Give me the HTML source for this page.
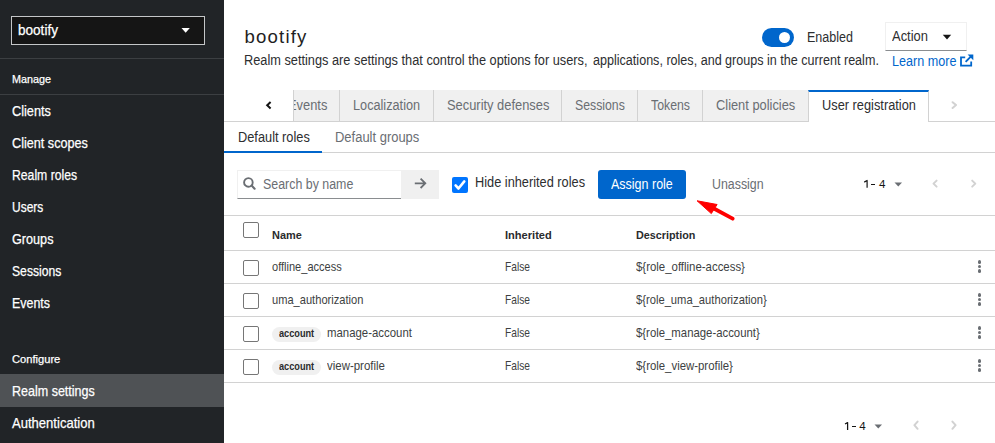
<!DOCTYPE html>
<html><head><meta charset="utf-8"><title>Realm settings</title>
<style>
html,body{margin:0;padding:0;}
body{width:995px;height:443px;position:relative;overflow:hidden;background:#fff;font-family:"Liberation Sans",sans-serif;}
</style></head><body>
<div style="position:absolute;left:0px;top:0px;width:224px;height:443px;background:#212427;"></div>
<div style="position:absolute;left:11px;top:16px;width:194px;height:29px;background:#151515;box-sizing:border-box;border:1px solid #c4c6c8;"></div>
<div style="position:absolute;left:18.00px;top:16px;font-size:14.4px;line-height:29px;height:29px;color:#fff;font-weight:400;letter-spacing:0.000px;white-space:nowrap;-webkit-text-stroke:0.25px #fff;transform:scaleX(0.9423);transform-origin:0 0;">bootify</div>
<svg style="position:absolute;left:181px;top:27px" width="10" height="7" viewBox="0 0 10 7"><path d="M0.5 1.1 L8.8 1.1 L4.65 5.7 Z" fill="#fff"/></svg>
<div style="position:absolute;left:0px;top:58px;width:224px;height:1px;background:#3c3f42;"></div>
<div style="position:absolute;left:12.00px;top:68px;font-size:11.3px;line-height:23px;height:23px;color:#fff;font-weight:400;letter-spacing:0.000px;white-space:nowrap;-webkit-text-stroke:0.25px #fff;transform:scaleX(0.9547);transform-origin:0 0;">Manage</div>
<div style="position:absolute;left:0px;top:94px;width:224px;height:1px;background:#3c3f42;"></div>
<div style="position:absolute;left:12.00px;top:97px;font-size:14.2px;line-height:28px;height:28px;color:#fff;font-weight:400;letter-spacing:0.000px;white-space:nowrap;-webkit-text-stroke:0.25px #fff;transform:scaleX(0.8986);transform-origin:0 0;">Clients</div>
<div style="position:absolute;left:12.00px;top:129px;font-size:14.2px;line-height:28px;height:28px;color:#fff;font-weight:400;letter-spacing:0.000px;white-space:nowrap;-webkit-text-stroke:0.25px #fff;transform:scaleX(0.8915);transform-origin:0 0;">Client scopes</div>
<div style="position:absolute;left:12.00px;top:161px;font-size:14.2px;line-height:28px;height:28px;color:#fff;font-weight:400;letter-spacing:0.000px;white-space:nowrap;-webkit-text-stroke:0.25px #fff;transform:scaleX(0.8607);transform-origin:0 0;">Realm roles</div>
<div style="position:absolute;left:12.00px;top:193px;font-size:14.2px;line-height:28px;height:28px;color:#fff;font-weight:400;letter-spacing:0.000px;white-space:nowrap;-webkit-text-stroke:0.25px #fff;transform:scaleX(0.8437);transform-origin:0 0;">Users</div>
<div style="position:absolute;left:12.00px;top:225px;font-size:14.2px;line-height:28px;height:28px;color:#fff;font-weight:400;letter-spacing:0.000px;white-space:nowrap;-webkit-text-stroke:0.25px #fff;transform:scaleX(0.8915);transform-origin:0 0;">Groups</div>
<div style="position:absolute;left:12.00px;top:257px;font-size:14.2px;line-height:28px;height:28px;color:#fff;font-weight:400;letter-spacing:0.000px;white-space:nowrap;-webkit-text-stroke:0.25px #fff;transform:scaleX(0.8576);transform-origin:0 0;">Sessions</div>
<div style="position:absolute;left:12.00px;top:289px;font-size:14.2px;line-height:28px;height:28px;color:#fff;font-weight:400;letter-spacing:0.000px;white-space:nowrap;-webkit-text-stroke:0.25px #fff;transform:scaleX(0.8756);transform-origin:0 0;">Events</div>
<div style="position:absolute;left:12.00px;top:348px;font-size:11.3px;line-height:23px;height:23px;color:#fff;font-weight:400;letter-spacing:0.000px;white-space:nowrap;-webkit-text-stroke:0.25px #fff;transform:scaleX(0.9857);transform-origin:0 0;">Configure</div>
<div style="position:absolute;left:0px;top:374px;width:224px;height:33px;background:#4f5255;"></div>
<div style="position:absolute;left:12.00px;top:377px;font-size:14.2px;line-height:28px;height:28px;color:#fff;font-weight:400;letter-spacing:0.000px;white-space:nowrap;-webkit-text-stroke:0.25px #fff;transform:scaleX(0.8818);transform-origin:0 0;">Realm settings</div>
<div style="position:absolute;left:12.00px;top:409px;font-size:14.2px;line-height:28px;height:28px;color:#fff;font-weight:400;letter-spacing:0.000px;white-space:nowrap;-webkit-text-stroke:0.25px #fff;transform:scaleX(0.9200);transform-origin:0 0;">Authentication</div>
<div style="position:absolute;left:244.50px;top:18px;font-size:18.6px;line-height:37px;height:37px;color:#1f1f1f;font-weight:400;letter-spacing:1.183px;white-space:nowrap;">bootify</div>
<div style="position:absolute;left:244.00px;top:46px;font-size:14px;line-height:28px;height:28px;color:#2d2e30;font-weight:400;letter-spacing:0.000px;white-space:nowrap;transform:scaleX(0.9120);transform-origin:0 0;">Realm settings are settings that control the options for users,</div>
<div style="position:absolute;left:592.60px;top:46px;font-size:14px;line-height:28px;height:28px;color:#2d2e30;font-weight:400;letter-spacing:0.000px;white-space:nowrap;transform:scaleX(0.8982);transform-origin:0 0;">applications, roles, and groups in the current realm.</div>
<div style="position:absolute;left:762px;top:28px;width:32px;height:19px;background:#0066cc;border-radius:10px;"></div>
<div style="position:absolute;left:778.5px;top:32px;width:11px;height:11px;background:#fff;border-radius:50%;"></div>
<div style="position:absolute;left:807.00px;top:24px;font-size:13.8px;line-height:28px;height:28px;color:#2d2e30;font-weight:400;letter-spacing:0.000px;white-space:nowrap;transform:scaleX(0.9082);transform-origin:0 0;">Enabled</div>
<div style="position:absolute;left:885px;top:22px;width:82px;height:29px;background:#fff;box-sizing:border-box;border:1px solid #f0f0f0;border-bottom-color:#8a8d90;"></div>
<div style="position:absolute;left:892.00px;top:23px;font-size:13.8px;line-height:28px;height:28px;color:#2d2e30;font-weight:400;letter-spacing:0.000px;white-space:nowrap;transform:scaleX(0.9387);transform-origin:0 0;">Action</div>
<svg style="position:absolute;left:942px;top:34px" width="10" height="7" viewBox="0 0 10 7"><path d="M0.8 0.8 L9.2 0.8 L5 5.5 Z" fill="#151515"/></svg>
<div style="position:absolute;left:892.00px;top:48px;font-size:13.8px;line-height:28px;height:28px;color:#0066cc;font-weight:400;letter-spacing:0.000px;white-space:nowrap;transform:scaleX(0.9128);transform-origin:0 0;">Learn more</div>
<svg style="position:absolute;left:960px;top:54px" width="14" height="13" viewBox="0 0 14 13"><path d="M5.2 3.4 H1 V11.6 H11.2 V7.6" fill="none" stroke="#0066cc" stroke-width="1.8"/><path d="M5.6 7.8 L11 2.4" stroke="#0066cc" stroke-width="1.9"/><path d="M7.6 0.6 H13.3 V6.3 Z" fill="#0066cc"/></svg>
<svg style="position:absolute;left:265px;top:101px" width="8" height="9" viewBox="0 0 8 9"><path d="M5.6 1.1 L2.2 4.3 L5.6 7.5" fill="none" stroke="#151515" stroke-width="2"/></svg>
<div style="position:absolute;left:224px;top:121px;width:771px;height:1px;background:#d2d2d2;"></div>
<div style="position:absolute;left:293px;top:90px;width:515px;height:31px;background:#f0f0f0;"></div>
<div style="position:absolute;left:293px;top:90px;width:1px;height:31px;background:#d2d2d2;"></div>
<div style="position:absolute;left:339px;top:90px;width:1px;height:31px;background:#d2d2d2;"></div>
<div style="position:absolute;left:433px;top:90px;width:1px;height:31px;background:#d2d2d2;"></div>
<div style="position:absolute;left:561px;top:90px;width:1px;height:31px;background:#d2d2d2;"></div>
<div style="position:absolute;left:637px;top:90px;width:1px;height:31px;background:#d2d2d2;"></div>
<div style="position:absolute;left:702px;top:90px;width:1px;height:31px;background:#d2d2d2;"></div>
<div style="position:absolute;left:294px;top:90px;width:45px;height:31px;overflow:hidden">
<div style="position:absolute;left:-6.00px;top:1px;font-size:14px;line-height:28px;height:28px;color:#6a6e73;font-weight:400;letter-spacing:0.000px;white-space:nowrap;transform:scaleX(0.92);transform-origin:0 0;">Events</div>
</div>
<div style="position:absolute;left:353.40px;top:91px;font-size:14px;line-height:28px;height:28px;color:#6a6e73;font-weight:400;letter-spacing:0.000px;white-space:nowrap;transform:scaleX(0.9074);transform-origin:0 0;">Localization</div>
<div style="position:absolute;left:446.60px;top:91px;font-size:14px;line-height:28px;height:28px;color:#6a6e73;font-weight:400;letter-spacing:0.000px;white-space:nowrap;transform:scaleX(0.9200);transform-origin:0 0;">Security defenses</div>
<div style="position:absolute;left:574.70px;top:91px;font-size:14px;line-height:28px;height:28px;color:#6a6e73;font-weight:400;letter-spacing:0.000px;white-space:nowrap;transform:scaleX(0.8768);transform-origin:0 0;">Sessions</div>
<div style="position:absolute;left:651.00px;top:91px;font-size:14px;line-height:28px;height:28px;color:#6a6e73;font-weight:400;letter-spacing:0.000px;white-space:nowrap;transform:scaleX(0.8794);transform-origin:0 0;">Tokens</div>
<div style="position:absolute;left:716.30px;top:91px;font-size:14px;line-height:28px;height:28px;color:#6a6e73;font-weight:400;letter-spacing:0.000px;white-space:nowrap;transform:scaleX(0.9172);transform-origin:0 0;">Client policies</div>
<div style="position:absolute;left:808px;top:90px;width:121px;height:32px;background:#fff;box-sizing:border-box;border-left:1px solid #d2d2d2;border-right:1px solid #d2d2d2;border-top:2px solid #0066cc;"></div>
<div style="position:absolute;left:821.60px;top:91px;font-size:14px;line-height:28px;height:28px;color:#2d2e30;font-weight:400;letter-spacing:0.000px;white-space:nowrap;transform:scaleX(0.9143);transform-origin:0 0;">User registration</div>
<svg style="position:absolute;left:950px;top:101px" width="8" height="9" viewBox="0 0 8 9"><path d="M2.6 1.2 L6 4.1 L2.6 7" fill="none" stroke="#d2d2d2" stroke-width="2" stroke-linecap="round" stroke-linejoin="round"/></svg>
<div style="position:absolute;left:224px;top:152px;width:771px;height:1px;background:#d2d2d2;"></div>
<div style="position:absolute;left:224px;top:151px;width:98px;height:2px;background:#0066cc;"></div>
<div style="position:absolute;left:237.60px;top:123px;font-size:14px;line-height:28px;height:28px;color:#2d2e30;font-weight:400;letter-spacing:0.000px;white-space:nowrap;transform:scaleX(0.9135);transform-origin:0 0;">Default roles</div>
<div style="position:absolute;left:335.20px;top:123px;font-size:14px;line-height:28px;height:28px;color:#6a6e73;font-weight:400;letter-spacing:0.000px;white-space:nowrap;transform:scaleX(0.9259);transform-origin:0 0;">Default groups</div>
<div style="position:absolute;left:237px;top:170px;width:164px;height:29px;background:#fff;box-sizing:border-box;border:1px solid #f0f0f0;border-bottom-color:#8a8d90;border-right:none;"></div>
<svg style="position:absolute;left:243px;top:177px" width="14" height="14" viewBox="0 0 14 14"><circle cx="5.4" cy="5.4" r="4.3" fill="none" stroke="#6a6e73" stroke-width="1.9"/><path d="M8.6 8.6 L11.6 11.7" stroke="#6a6e73" stroke-width="2.1" stroke-linecap="round"/></svg>
<div style="position:absolute;left:262.70px;top:170px;font-size:14px;line-height:28px;height:28px;color:#6a6e73;font-weight:400;letter-spacing:0.000px;white-space:nowrap;transform:scaleX(0.8857);transform-origin:0 0;">Search by name</div>
<div style="position:absolute;left:401px;top:170px;width:38px;height:29px;background:#f0f0f0;"></div>
<svg style="position:absolute;left:413px;top:176px" width="15" height="14" viewBox="0 0 15 14"><path d="M1.8 7.3 H12.4 M7.6 2.6 L12.3 7.3 L7.6 12" fill="none" stroke="#6a6e73" stroke-width="1.8"/></svg>
<div style="position:absolute;left:452px;top:177px;width:16px;height:16px;background:#0075ff;border-radius:2px;"></div>
<svg style="position:absolute;left:452px;top:177px" width="16" height="16" viewBox="0 0 16 16"><path d="M3.6 8.4 L6.5 11.5 L12.3 4.4" fill="none" stroke="#fff" stroke-width="2.6" stroke-linecap="round" stroke-linejoin="round"/></svg>
<div style="position:absolute;left:475.00px;top:168px;font-size:14px;line-height:28px;height:28px;color:#2d2e30;font-weight:400;letter-spacing:0.000px;white-space:nowrap;transform:scaleX(0.9121);transform-origin:0 0;">Hide inherited roles</div>
<div style="position:absolute;left:598px;top:170px;width:88px;height:29px;background:#0066cc;border-radius:3px;"></div>
<div style="position:absolute;left:611.30px;top:170px;font-size:14px;line-height:28px;height:28px;color:#fff;font-weight:400;letter-spacing:0.000px;white-space:nowrap;transform:scaleX(0.8924);transform-origin:0 0;">Assign role</div>
<div style="position:absolute;left:712.00px;top:170px;font-size:14px;line-height:28px;height:28px;color:#6a6e73;font-weight:400;letter-spacing:0.000px;white-space:nowrap;transform:scaleX(0.8843);transform-origin:0 0;">Unassign</div>
<svg style="position:absolute;left:862px;top:178px" width="8" height="12" viewBox="0 0 8 12"><path d="M2.2 4.1 L5.1 2.5 V9.8" fill="none" stroke="#151515" stroke-width="1.2" stroke-linejoin="round"/></svg>
<div style="position:absolute;left:871px;top:183.6px;width:4px;height:1.3px;background:#151515;"></div>
<div style="position:absolute;left:879.00px;top:172px;font-size:11.6px;line-height:23px;height:23px;color:#151515;font-weight:400;letter-spacing:0.000px;white-space:nowrap;">4</div>
<svg style="position:absolute;left:893.5px;top:182px" width="9" height="5" viewBox="0 0 9 5"><path d="M0.5 0.5 H8 L4.25 4.5 Z" fill="#6a6e73"/></svg>
<svg style="position:absolute;left:931px;top:179px" width="8" height="10" viewBox="0 0 8 10"><path d="M5.6 1.6 L2.5 4.6 L5.6 7.6" fill="none" stroke="#d2d2d2" stroke-width="2" stroke-linecap="round" stroke-linejoin="round"/></svg>
<svg style="position:absolute;left:969px;top:179px" width="8" height="10" viewBox="0 0 8 10"><path d="M3.2 1.6 L6.3 4.6 L3.2 7.6" fill="none" stroke="#d2d2d2" stroke-width="2" stroke-linecap="round" stroke-linejoin="round"/></svg>
<div style="position:absolute;left:224px;top:215px;width:771px;height:1px;background:#d2d2d2;"></div>
<div style="position:absolute;left:243px;top:222px;width:16px;height:16px;background:#fff;box-sizing:border-box;border:1px solid #767676;border-radius:2px;"></div>
<div style="position:absolute;left:272.20px;top:223px;font-size:11.6px;line-height:23px;height:23px;color:#2a2b2d;font-weight:700;letter-spacing:0.000px;white-space:nowrap;transform:scaleX(0.9430);transform-origin:0 0;">Name</div>
<div style="position:absolute;left:505.00px;top:223px;font-size:11.6px;line-height:23px;height:23px;color:#2a2b2d;font-weight:700;letter-spacing:0.000px;white-space:nowrap;transform:scaleX(0.9551);transform-origin:0 0;">Inherited</div>
<div style="position:absolute;left:636.20px;top:223px;font-size:11.6px;line-height:23px;height:23px;color:#2a2b2d;font-weight:700;letter-spacing:0.000px;white-space:nowrap;transform:scaleX(0.9310);transform-origin:0 0;">Description</div>
<div style="position:absolute;left:224px;top:250px;width:771px;height:1px;background:#d2d2d2;"></div>
<div style="position:absolute;left:243px;top:260px;width:16px;height:16px;background:#fff;box-sizing:border-box;border:1px solid #767676;border-radius:2px;"></div>
<div style="position:absolute;left:272.20px;top:255px;font-size:12.4px;line-height:25px;height:25px;color:#3d3f42;font-weight:400;letter-spacing:0.000px;white-space:nowrap;transform:scaleX(0.8909);transform-origin:0 0;">offline_access</div>
<div style="position:absolute;left:505.00px;top:255px;font-size:12.4px;line-height:25px;height:25px;color:#3d3f42;font-weight:400;letter-spacing:0.000px;white-space:nowrap;transform:scaleX(0.8251);transform-origin:0 0;">False</div>
<div style="position:absolute;left:635.70px;top:255px;font-size:12.4px;line-height:25px;height:25px;color:#3d3f42;font-weight:400;letter-spacing:0.000px;white-space:nowrap;transform:scaleX(0.9210);transform-origin:0 0;">${role_offline-access}</div>
<div style="position:absolute;left:977.6px;top:260.04999999999995px;width:3.6px;height:3.6px;background:#6a6e73;border-radius:50%;"></div>
<div style="position:absolute;left:977.6px;top:264.65px;width:3.6px;height:3.6px;background:#6a6e73;border-radius:50%;"></div>
<div style="position:absolute;left:977.6px;top:269.15px;width:3.6px;height:3.6px;background:#6a6e73;border-radius:50%;"></div>
<div style="position:absolute;left:224px;top:283px;width:771px;height:1px;background:#d2d2d2;"></div>
<div style="position:absolute;left:243px;top:293px;width:16px;height:16px;background:#fff;box-sizing:border-box;border:1px solid #767676;border-radius:2px;"></div>
<div style="position:absolute;left:272.20px;top:288px;font-size:12.4px;line-height:25px;height:25px;color:#3d3f42;font-weight:400;letter-spacing:0.000px;white-space:nowrap;transform:scaleX(0.8961);transform-origin:0 0;">uma_authorization</div>
<div style="position:absolute;left:505.00px;top:288px;font-size:12.4px;line-height:25px;height:25px;color:#3d3f42;font-weight:400;letter-spacing:0.000px;white-space:nowrap;transform:scaleX(0.8251);transform-origin:0 0;">False</div>
<div style="position:absolute;left:635.70px;top:288px;font-size:12.4px;line-height:25px;height:25px;color:#3d3f42;font-weight:400;letter-spacing:0.000px;white-space:nowrap;transform:scaleX(0.9036);transform-origin:0 0;">${role_uma_authorization}</div>
<div style="position:absolute;left:977.6px;top:293.04999999999995px;width:3.6px;height:3.6px;background:#6a6e73;border-radius:50%;"></div>
<div style="position:absolute;left:977.6px;top:297.65px;width:3.6px;height:3.6px;background:#6a6e73;border-radius:50%;"></div>
<div style="position:absolute;left:977.6px;top:302.15px;width:3.6px;height:3.6px;background:#6a6e73;border-radius:50%;"></div>
<div style="position:absolute;left:224px;top:316px;width:771px;height:1px;background:#d2d2d2;"></div>
<div style="position:absolute;left:243px;top:326px;width:16px;height:16px;background:#fff;box-sizing:border-box;border:1px solid #767676;border-radius:2px;"></div>
<div style="position:absolute;left:272px;top:326.9px;width:49px;height:15px;background:#f0f0f0;border-radius:8px;"></div>
<div style="position:absolute;left:278.80px;top:323px;font-size:10.4px;line-height:21px;height:21px;color:#2a2b2d;font-weight:700;letter-spacing:0.000px;white-space:nowrap;transform:scaleX(0.8822);transform-origin:0 0;">account</div>
<div style="position:absolute;left:327.00px;top:321px;font-size:12.4px;line-height:25px;height:25px;color:#3d3f42;font-weight:400;letter-spacing:0.000px;white-space:nowrap;transform:scaleX(0.9204);transform-origin:0 0;">manage-account</div>
<div style="position:absolute;left:505.00px;top:321px;font-size:12.4px;line-height:25px;height:25px;color:#3d3f42;font-weight:400;letter-spacing:0.000px;white-space:nowrap;transform:scaleX(0.8251);transform-origin:0 0;">False</div>
<div style="position:absolute;left:635.70px;top:321px;font-size:12.4px;line-height:25px;height:25px;color:#3d3f42;font-weight:400;letter-spacing:0.000px;white-space:nowrap;transform:scaleX(0.9164);transform-origin:0 0;">${role_manage-account}</div>
<div style="position:absolute;left:977.6px;top:326.04999999999995px;width:3.6px;height:3.6px;background:#6a6e73;border-radius:50%;"></div>
<div style="position:absolute;left:977.6px;top:330.65px;width:3.6px;height:3.6px;background:#6a6e73;border-radius:50%;"></div>
<div style="position:absolute;left:977.6px;top:335.15px;width:3.6px;height:3.6px;background:#6a6e73;border-radius:50%;"></div>
<div style="position:absolute;left:224px;top:349px;width:771px;height:1px;background:#d2d2d2;"></div>
<div style="position:absolute;left:243px;top:359px;width:16px;height:16px;background:#fff;box-sizing:border-box;border:1px solid #767676;border-radius:2px;"></div>
<div style="position:absolute;left:272px;top:359.9px;width:49px;height:15px;background:#f0f0f0;border-radius:8px;"></div>
<div style="position:absolute;left:278.80px;top:356px;font-size:10.4px;line-height:21px;height:21px;color:#2a2b2d;font-weight:700;letter-spacing:0.000px;white-space:nowrap;transform:scaleX(0.8822);transform-origin:0 0;">account</div>
<div style="position:absolute;left:327.00px;top:354px;font-size:12.4px;line-height:25px;height:25px;color:#3d3f42;font-weight:400;letter-spacing:0.000px;white-space:nowrap;transform:scaleX(0.9250);transform-origin:0 0;">view-profile</div>
<div style="position:absolute;left:505.00px;top:354px;font-size:12.4px;line-height:25px;height:25px;color:#3d3f42;font-weight:400;letter-spacing:0.000px;white-space:nowrap;transform:scaleX(0.8251);transform-origin:0 0;">False</div>
<div style="position:absolute;left:635.70px;top:354px;font-size:12.4px;line-height:25px;height:25px;color:#3d3f42;font-weight:400;letter-spacing:0.000px;white-space:nowrap;transform:scaleX(0.9189);transform-origin:0 0;">${role_view-profile}</div>
<div style="position:absolute;left:977.6px;top:359.04999999999995px;width:3.6px;height:3.6px;background:#6a6e73;border-radius:50%;"></div>
<div style="position:absolute;left:977.6px;top:363.65px;width:3.6px;height:3.6px;background:#6a6e73;border-radius:50%;"></div>
<div style="position:absolute;left:977.6px;top:368.15px;width:3.6px;height:3.6px;background:#6a6e73;border-radius:50%;"></div>
<div style="position:absolute;left:224px;top:382px;width:771px;height:1px;background:#d2d2d2;"></div>
<svg style="position:absolute;left:843px;top:420px" width="8" height="12" viewBox="0 0 8 12"><path d="M2 4 L4.6 2.6 V10" fill="none" stroke="#151515" stroke-width="1.25" stroke-linejoin="round"/></svg>
<div style="position:absolute;left:852.3px;top:425.6px;width:4px;height:1.3px;background:#151515;"></div>
<div style="position:absolute;left:859.30px;top:414px;font-size:11.6px;line-height:23px;height:23px;color:#151515;font-weight:400;letter-spacing:0.000px;white-space:nowrap;">4</div>
<svg style="position:absolute;left:874px;top:424px" width="9" height="5" viewBox="0 0 9 5"><path d="M0.5 0.5 H8 L4.25 4.5 Z" fill="#6a6e73"/></svg>
<svg style="position:absolute;left:912px;top:420px" width="8" height="11" viewBox="0 0 8 11"><path d="M5.6 1.6 L2.4 5.2 L5.6 8.8" fill="none" stroke="#d2d2d2" stroke-width="2" stroke-linecap="round" stroke-linejoin="round"/></svg>
<svg style="position:absolute;left:950px;top:420px" width="8" height="11" viewBox="0 0 8 11"><path d="M2.4 1.6 L5.6 5.2 L2.4 8.8" fill="none" stroke="#d2d2d2" stroke-width="2" stroke-linecap="round" stroke-linejoin="round"/></svg>
<svg style="position:absolute;left:690px;top:195px" width="50" height="30" viewBox="0 0 50 30"><g stroke="#fff" stroke-width="4.5" stroke-linejoin="round" stroke-linecap="round" fill="#fff"><path d="M24 13.6 L42.7 23.7" stroke-width="8"/></g><path d="M22 12.5 L42.7 23.7" stroke="#ff0000" stroke-width="3.8" stroke-linecap="round"/><path d="M7.1 5.8 L27.1 9.5 L21.3 18.6 Z" fill="#ff0000" stroke="#ff0000" stroke-width="1" stroke-linejoin="round"/></svg>
</body></html>
